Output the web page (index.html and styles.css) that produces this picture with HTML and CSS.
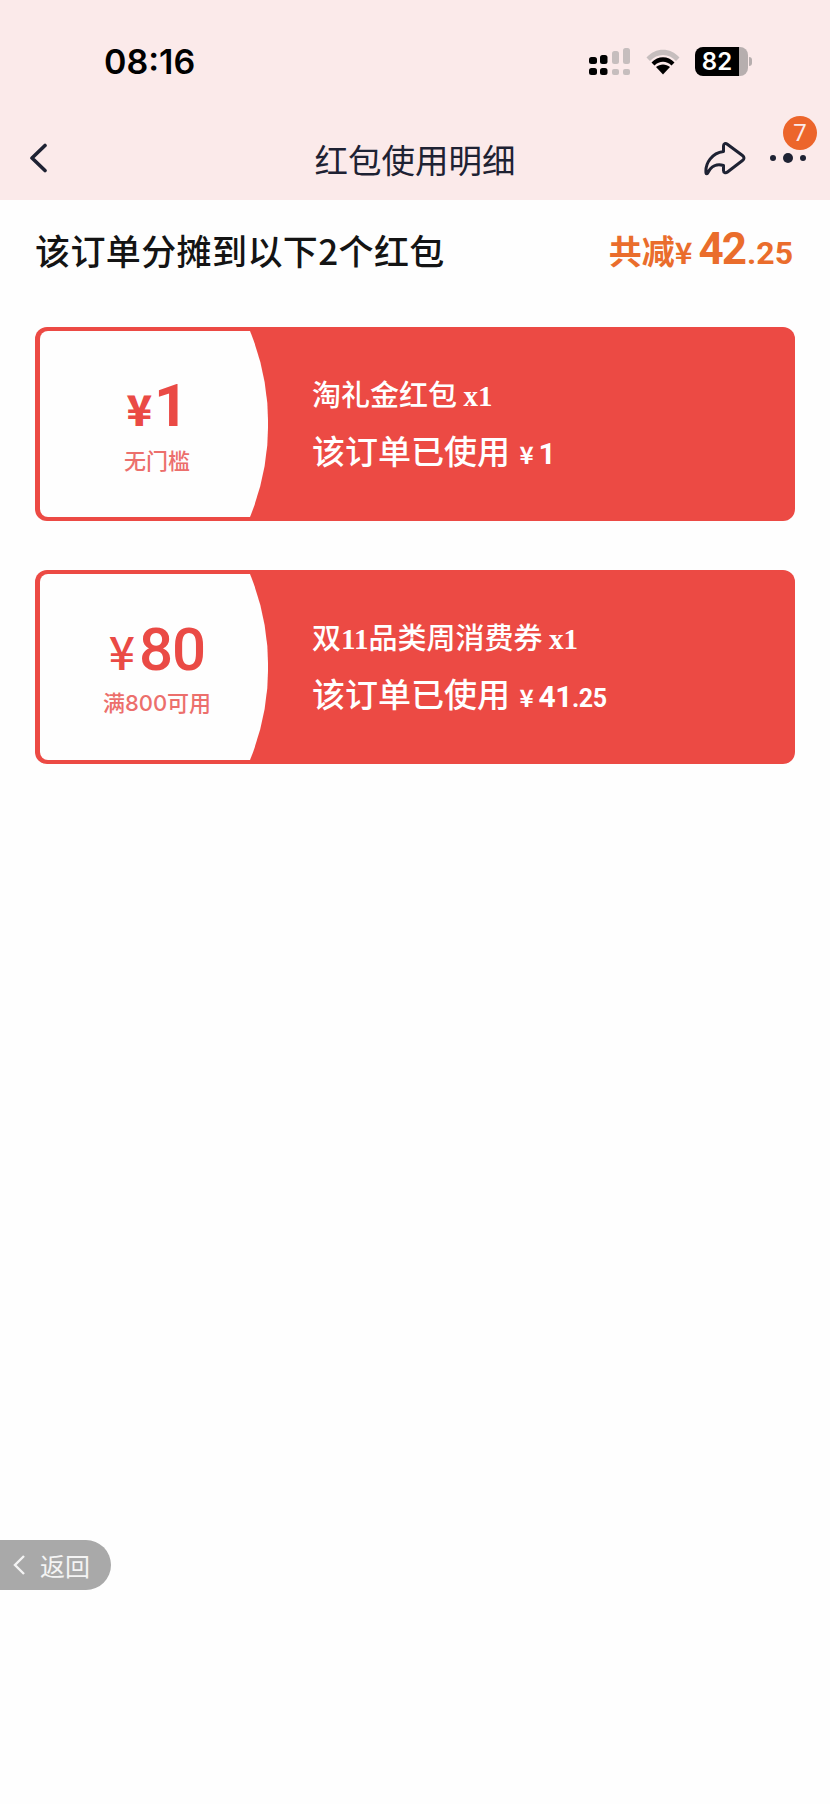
FILE: index.html
```html
<!DOCTYPE html>
<html>
<head>
  <meta charset="utf-8">
  <meta name="viewport" content="width=device-width">
  <title>红包使用明细</title>
  <link rel="stylesheet" href="styles.css">
</head>
<body>
  <div class="page">
    <header class="header">
      <div class="status">
        <span class="time">08:16</span>
        <div class="status-icons">
          <svg class="signal" width="41" height="27" viewBox="0 0 41 27">
            <rect x="0" y="9" width="8" height="7" rx="2.5" fill="#000"/>
            <rect x="11" y="7" width="7.500" height="9" rx="2.500" fill="#000"/>
            <rect x="23" y="3" width="7" height="13" rx="2.500" fill="#c6bebe"/>
            <rect x="34" y="0" width="7" height="16" rx="2.500" fill="#c6bebe"/>
            <rect x="0" y="20" width="8" height="7" rx="2.500" fill="#000"/>
            <rect x="11" y="20" width="7.500" height="7" rx="2.500" fill="#000"/>
            <rect x="23" y="21" width="7" height="6" rx="2" fill="#c6bebe"/>
            <rect x="34" y="21" width="7" height="6" rx="2" fill="#c6bebe"/>
          </svg>
          <svg class="wifi" width="36" height="27" viewBox="0 0 36 27">
            <path d="M1.500 9.500C10.500 -1 25.500 -1 34.500 9.500L31 13C24 5 12 5 5 13Z" fill="#c6bebe"/>
            <path d="M6.500 14.500C13 7.500 23 7.500 29.500 14.500L26.500 17.500C21.500 12.500 14.500 12.500 9.500 17.500Z" fill="#000"/>
            <path d="M11 19C15 15.500 21 15.500 25 19L18 26.500Z" fill="#000"/>
          </svg>
          <div class="battery"><span>82</span></div>
          <div class="battery-tip"></div>
        </div>
      </div>
      <nav class="nav">
        <svg class="back" width="19" height="30" viewBox="0 0 19 30">
          <path d="M16 2.500L3 15L16 27.500" fill="none" stroke="#1e2233" stroke-width="3.600" stroke-linecap="round" stroke-linejoin="round"/>
        </svg>
        <h1 class="title">红包使用明细</h1>
        <div class="actions">
          <svg class="share" width="42" height="35" viewBox="0 0 42 35">
            <path d="M2 32C1 22 8 12 19.500 10.500L19.500 5C19.500 2.500 21.500 1.800 23.300 3.200L38.500 14.500C40.500 16 40.500 18 38.500 19.500L23.500 31C21.500 32.500 19.500 31.500 19.500 29.500L19.500 24.500C13 22.500 7 25 3.800 31.800C3.300 33 2.100 33 2 32Z" fill="none" stroke="#1e2233" stroke-width="3" stroke-linejoin="round"/>
          </svg>
          <div class="more">
            <i class="dot"></i><i class="dot dot-big"></i><i class="dot"></i>
            <span class="badge">7</span>
          </div>
        </div>
      </nav>
    </header>

    <main class="content">
      <div class="summary">
        <h2 class="summary-title">该订单分摊到以下2个红包</h2>
        <div class="summary-total">共减<span class="yen">¥</span><b>42</b><b class="cents">.25</b></div>
      </div>

      <section class="card">
        <div class="stub">
          <div class="amount"><span class="amount-yen">¥</span>1</div>
          <div class="cond">无门槛</div>
        </div>
        <div class="info">
          <div class="info-name">淘礼金红包 <span class="times">x1</span></div>
          <div class="info-used">该订单已使用 <span class="used-yen">¥</span><b>1</b></div>
        </div>
      </section>

      <section class="card">
        <div class="stub">
          <div class="amount amount-wide"><span class="amount-yen">¥</span>80</div>
          <div class="cond">满800可用</div>
        </div>
        <div class="info">
          <div class="info-name">双<span class="serif">11</span>品类周消费券 <span class="times">x1</span></div>
          <div class="info-used">该订单已使用 <span class="used-yen">¥</span><b>41</b><b class="used-cents">.25</b></div>
        </div>
      </section>
    </main>

    <div class="float-back">
      <svg width="14" height="22" viewBox="0 0 14 22">
        <path d="M12 2L3 11L12 20" fill="none" stroke="#f4f4f4" stroke-width="2.400"/>
      </svg>
      <span>返回</span>
    </div>
  </div>
</body>
</html>
```

FILE: styles.css
```css
html, body {
  margin: 0;
  padding: 0;
}

body {
  font-family: "Noto Sans CJK SC", "Noto Sans", sans-serif;
  background: #fefefe;
}

.page {
  position: relative;
  width: 830px;
  height: 1804px;
  overflow: hidden;
}

/* header */
.header {
  height: 200px;
  box-sizing: border-box;
  padding-top: 40px;
  background: #fbeaea;
}

.status {
  display: flex;
  align-items: center;
  justify-content: space-between;
  height: 42px;
  padding: 0 78px 0 104px;
}

.time {
  font-family: Inter, sans-serif;
  font-size: 34px;
  font-weight: 600;
  color: #000;
}

.status-icons {
  display: flex;
  align-items: center;
}

.wifi {
  margin-left: 15px;
}

.battery {
  width: 44px;
  height: 29px;
  margin-left: 14px;
  padding-right: 9px;
  border-radius: 8px;
  background: linear-gradient(90deg, #000 83%, #b6aeae 83%);
  color: #fff;
  font-family: Inter, sans-serif;
  font-size: 24px;
  font-weight: 600;
  line-height: 29px;
  text-align: center;
}

.battery-tip {
  width: 3px;
  height: 9px;
  margin-left: 1px;
  border-radius: 0 3px 3px 0;
  background: #b6aeae;
}

.nav {
  display: grid;
  grid-template-columns: 1fr auto 1fr;
  align-items: center;
  height: 72px;
  margin-top: 40px;
  padding: 0 24px;
}

.back {
  margin-left: 5px;
}

.title {
  margin: 0;
  font-size: 33.500px;
  font-weight: 400;
  color: #1e2233;
}

.actions {
  display: flex;
  align-items: center;
  justify-self: end;
}

.more {
  position: relative;
  display: flex;
  align-items: center;
  gap: 7px;
  margin-left: 24px;
}

.dot {
  width: 6px;
  height: 6px;
  border-radius: 50%;
  background: #1e2233;
}

.dot-big {
  width: 10px;
  height: 10px;
}

.badge {
  position: absolute;
  top: -37px;
  left: 13px;
  width: 34px;
  height: 34px;
  border-radius: 50%;
  background: #ec652b;
  color: #fbeaea;
  font-family: Roboto, sans-serif;
  font-size: 24px;
  line-height: 34px;
  text-align: center;
}

/* content */
.content {
  padding: 0 35px;
}

.summary {
  display: flex;
  align-items: center;
  justify-content: space-between;
  box-sizing: border-box;
  height: 104px;
  margin-bottom: 23px;
  padding: 0 2px 6px 0;
}

.summary-title {
  margin: 0;
  font-size: 35px;
  font-weight: 500;
  letter-spacing: 0.4px;
  color: #141414;
}

.summary-total {
  font-size: 33px;
  font-weight: 700;
  color: #ea6d2c;
  display: flex;
  align-items: baseline;
}

.summary-total .yen {
  font-size: 30px;
  margin-right: 6px;
}

.summary-total b {
  font-family: Roboto, sans-serif;
  font-size: 44px;
  font-weight: 700;
  letter-spacing: -2px;
}

.summary-total .cents {
  font-size: 32px;
  letter-spacing: 0;
  margin-left: 2px;
}

.card {
  display: flex;
  box-sizing: border-box;
  height: 194px;
  margin-bottom: 49px;
  padding: 4px 0 4px 5px;
  border-radius: 12px;
  background: #ec4a44;
}

.stub {
  display: flex;
  flex-direction: column;
  align-items: center;
  justify-content: center;
  width: 228px;
  padding-left: 6px;
  box-sizing: border-box;
  background: #fefefe;
  clip-path: path("M8 0H210A247 247 0 0 1 210 186H8A8 8 0 0 1 0 178V8A8 8 0 0 1 8 0Z");
  color: #ea4a45;
}

.amount {
  margin-top: 1px;
  font-family: Roboto, sans-serif;
  font-size: 60px;
  font-weight: 700;
  line-height: 64px;
  letter-spacing: -1px;
}

.amount-yen {
  font-family: "Noto Sans CJK SC", sans-serif;
  font-size: 42px;
  font-weight: 900;
  margin-right: 3px;
}

.amount-wide {
  font-weight: 500;
}

.amount-wide .amount-yen {
  font-size: 46px;
  font-weight: 500;
  margin-right: 5px;
}

.cond {
  margin-top: 6px;
  font-family: Inter, "Noto Sans CJK SC", sans-serif;
  font-size: 22px;
  font-weight: 500;
  line-height: 30px;
  color: #ec6f6c;
}

.info {
  padding: 42px 0 0 44px;
  color: #fff;
}

.info-name {
  height: 40px;
  font-size: 29px;
  font-weight: 500;
  line-height: 40px;
}

.times, .serif {
  font-family: "Liberation Serif", serif;
  font-weight: 700;
}

.info-used {
  height: 44px;
  margin-top: 15px;
  font-size: 33px;
  font-weight: 500;
  line-height: 44px;
  display: flex;
  align-items: baseline;
  white-space: pre;
}

.used-yen {
  font-size: 24px;
  font-weight: 700;
  margin: 0 5px 0 2px;
}

.info-used b {
  font-family: Roboto, sans-serif;
  font-size: 30px;
  font-weight: 700;
  letter-spacing: -0.5px;
}

.info-used .used-cents {
  font-size: 25px;
}

/* floating back pill */
.float-back {
  position: absolute;
  left: 0;
  top: 1540px;
  display: flex;
  align-items: center;
  gap: 14px;
  box-sizing: border-box;
  width: 111px;
  height: 50px;
  padding-left: 12px;
  border-radius: 0 25px 25px 0;
  background: #a9a9a9;
  color: #f4f4f4;
  font-size: 25px;
}
```
